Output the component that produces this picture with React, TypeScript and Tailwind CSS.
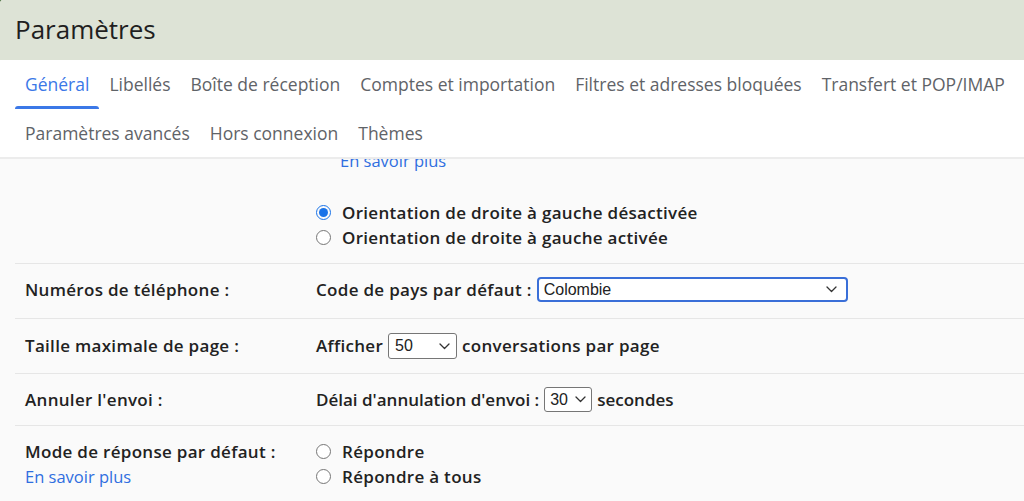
import React from "react"

const Chevron = ({ className = "" }: { className?: string }) => (
  <svg className={className} width="11" height="7" viewBox="0 0 11 7" fill="none">
    <path d="M1 1l4.5 4.5L10 1" stroke="#333" strokeWidth="1.3" strokeLinecap="round" strokeLinejoin="round" />
  </svg>
)

const Radio = ({ checked = false }: { checked?: boolean }) =>
  checked ? (
    <span className="w-[15px] h-[15px] rounded-full border-[1.5px] border-[#1a73e8] flex items-center justify-center shrink-0">
      <span className="w-[9px] h-[9px] rounded-full bg-[#1a73e8]" />
    </span>
  ) : (
    <span className="w-[15px] h-[15px] rounded-full border border-[#767676] bg-white shrink-0" />
  )

const Row = ({ label, link, children, className = "" }: { label: string; link?: boolean; children: React.ReactNode; className?: string }) => (
  <div className={"flex border-t border-[#e6e6e6] " + className}>
    <div className="w-[301px] shrink-0 pl-[10px] leading-[25px] font-semibold text-[17px] tracking-[0.3px] text-[#222]">
      <div>{label}</div>
      {link && <div className="font-normal text-[16.5px] tracking-normal text-[#2f6ee0]">En savoir plus</div>}
    </div>
    <div className="flex-1">{children}</div>
  </div>
)

export default function App() {
  const tabs1 = ["Général", "Libellés", "Boîte de réception", "Comptes et importation", "Filtres et adresses bloquées", "Transfert et POP/IMAP"]
  const tabs2 = ["Paramètres avancés", "Hors connexion", "Thèmes"]
  return (
    <div className="w-[1024px] h-[501px] overflow-hidden relative bg-[#dde3d6] font-['Open_Sans',sans-serif]">
      <div className="absolute -left-[30px] -top-[30px] w-[36px] h-[36px] rounded-full bg-[#456d3c]" />
      <div className="h-[60px] pl-[15px] pb-[1px] flex items-center text-[26px] text-[#1f1f1f]">Paramètres</div>
      <div className="bg-white">
        <div className="flex h-[50px] pl-[15px] items-stretch">
          {tabs1.map((t, i) => (
            <div key={t} className={"relative px-[10px] pb-[2px] flex items-center text-[17.5px] whitespace-nowrap " + (i === 0 ? "text-[#3b78e7]" : "text-[#5f6368]")}>
              {t}
              {i === 0 && <span className="absolute left-0 right-0 bottom-[1px] h-[3px] rounded-t-[3px] bg-[#3b78e7]" />}
            </div>
          ))}
        </div>
        <div className="flex h-[47px] pl-[15px] items-center">
          {tabs2.map((t) => (
            <div key={t} className="px-[10px] text-[17.5px] text-[#5f6368]">{t}</div>
          ))}
        </div>
      </div>
      <div className="h-[344px] bg-[#fafafa] border-t-2 border-[#ececec] overflow-hidden">
        <div className="ml-[15px] text-[#222]">
          <div className="flex pb-[13px]">
            <div className="w-[301px] shrink-0" />
            <div>
              <div className="-mt-[8px] h-[20px] leading-[20px] pl-[24px] text-[16.5px] text-[#2f6ee0]">En savoir plus</div>
              <div className="mt-[29px] flex items-center gap-[11px] h-[25px] font-semibold text-[17px] tracking-[0.3px]">
                <Radio checked />
                Orientation de droite à gauche désactivée
              </div>
              <div className="flex items-center gap-[11px] h-[25px] font-semibold text-[17px] tracking-[0.3px]">
                <Radio />
                Orientation de droite à gauche activée
              </div>
            </div>
          </div>
          <Row label="Numéros de téléphone :" className="pt-[13px] pb-[16px]">
            <div className="flex items-center gap-[5px] h-[25px] font-semibold text-[17px] tracking-[0.3px]">
              Code de pays par défaut :
              <div className="w-[311px] h-[25px] border-2 border-[#3a6fd8] rounded-[4px] bg-white flex items-center justify-between pl-[5px] pr-[9px] font-normal text-[16px] tracking-normal font-['Liberation_Sans',sans-serif]">
                Colombie
                <Chevron />
              </div>
            </div>
          </Row>
          <Row label="Taille maximale de page :" className="py-[14px]">
            <div className="flex items-center gap-[5px] h-[26px] font-semibold text-[17px] tracking-[0.3px]">
              Afficher
              <div className="w-[69px] h-[26px] border border-[#767676] rounded-[3px] bg-white flex items-center justify-between pl-[6px] pr-[6px] font-normal text-[16px] tracking-normal font-['Liberation_Sans',sans-serif]">
                50
                <Chevron />
              </div>
              conversations par page
            </div>
          </Row>
          <Row label="Annuler l'envoi :" className="py-[13px]">
            <div className="flex items-center gap-[5px] h-[25px] font-semibold text-[17px]">
              Délai d'annulation d'envoi :
              <div className="w-[48px] h-[25px] border border-[#767676] rounded-[3px] bg-white flex items-center justify-between pl-[5px] pr-[5px] font-normal text-[16px] font-['Liberation_Sans',sans-serif]">
                30
                <Chevron />
              </div>
              secondes
            </div>
          </Row>
          <Row label="Mode de réponse par défaut :" link className="pt-[13px]">
            <div className="flex items-center gap-[11px] h-[25px] font-semibold text-[17px] tracking-[0.3px]">
              <Radio />
              Répondre
            </div>
            <div className="flex items-center gap-[11px] h-[25px] font-semibold text-[17px] tracking-[0.3px]">
              <Radio />
              Répondre à tous
            </div>
          </Row>
        </div>
      </div>
    </div>
  )
}
